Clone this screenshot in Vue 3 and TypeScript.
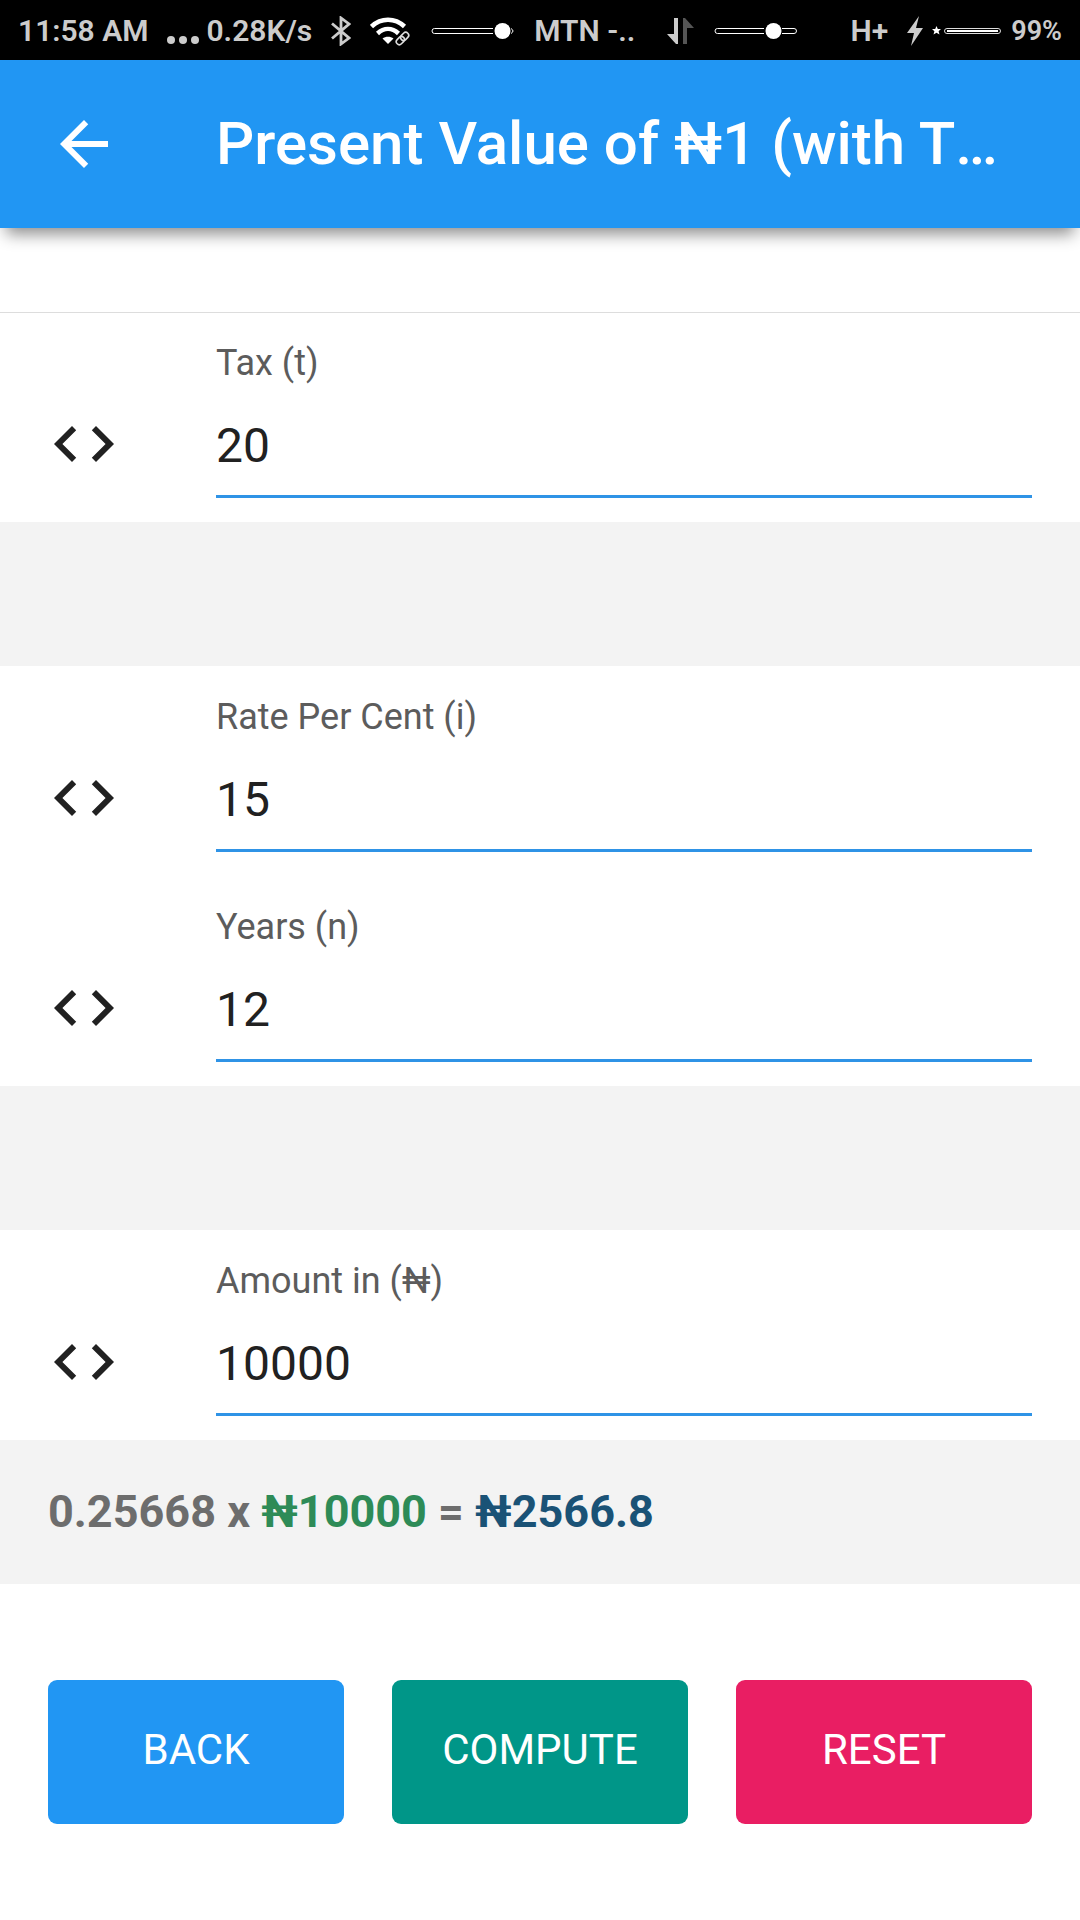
<script setup lang="ts">
import { reactive, ref } from 'vue'

type FieldKey = 'tax' | 'rate' | 'years' | 'amount'

interface Field {
  key: FieldKey
  label: string
}

const groups: Field[][] = [
  [{ key: 'tax', label: 'Tax (t)' }],
  [
    { key: 'rate', label: 'Rate Per Cent (i)' },
    { key: 'years', label: 'Years (n)' },
  ],
  [{ key: 'amount', label: 'Amount in (₦)' }],
]

const form = reactive<Record<FieldKey, string>>({
  tax: '20',
  rate: '15',
  years: '12',
  amount: '10000',
})

const result = ref({ factor: '0.25668', amount: '10000', value: '2566.8' })

// Present value factor of 1 with the rate taken net of tax: (1 + i(1 - t))^-n
function compute(): void {
  const net = (Number(form.rate) / 100) * (1 - Number(form.tax) / 100)
  const factor = Number(Math.pow(1 + net, -Number(form.years)).toFixed(5))
  const value = Number((factor * Number(form.amount)).toFixed(2))
  result.value = { factor: String(factor), amount: form.amount, value: String(value) }
}

function reset(): void {
  form.tax = ''
  form.rate = ''
  form.years = ''
  form.amount = ''
}

function back(): void {
  window.history.back()
}
</script>

<template>
  <div class="screen">
    <div class="status">
      <div class="status-group">
        <span>11:58 AM</span>
        <span class="speed">
          <svg width="32" height="36" viewBox="0 0 32 36" fill="currentColor" aria-hidden="true">
            <circle cx="4" cy="27" r="4" /><circle cx="16" cy="27" r="4" /><circle cx="28" cy="27" r="4" />
          </svg>
          <span>0.28K/s</span>
        </span>
        <svg width="20" height="30" viewBox="0 0 20 30" fill="none" stroke="currentColor" stroke-width="2.8" aria-hidden="true">
          <path d="M1 7.5 18 22 10 28V2L18 8 1 22.500" />
        </svg>
        <svg width="42" height="30" viewBox="0 0 42 30" aria-hidden="true">
          <g fill="none" stroke="#fff" stroke-width="4.500">
            <path d="M1.500 10.500C11 1.500 25 1.500 34.500 10.500" />
            <path d="M7.500 17.500C14 11.500 22 11.500 28.500 17.500" />
          </g>
          <path d="M18 28 12.500 22.500C15.500 20 20.500 20 23.500 22.500z" fill="#fff" />
          <g fill="none" stroke="#ddd" stroke-width="1.600" transform="rotate(-45 32.500 22.500)">
            <rect x="25" y="19.500" width="9" height="6" rx="3" />
            <rect x="31" y="19.500" width="9" height="6" rx="3" />
          </g>
        </svg>
        <svg width="84" height="18" viewBox="0 0 84 18" aria-hidden="true">
          <path d="M62 6.500H3.500a2.500 2.500 0 0 0 0 5H62M80 6.500q4 2.500 0 5" fill="none" stroke="#fff" />
          <circle cx="71.500" cy="9" r="8" fill="#fff" />
        </svg>
        <span>MTN -..</span>
      </div>
      <div class="status-group network">
        <svg width="28" height="28" viewBox="0 0 28 28" aria-hidden="true">
          <path d="M7 1h4v26H9L0 17h7z" fill="currentColor" />
          <path d="M20 27h-4V1h2l9 10h-7z" fill="#555" />
        </svg>
        <svg width="84" height="18" viewBox="0 0 84 18" aria-hidden="true">
          <path d="M50 6.500H3.500a2.500 2.500 0 0 0 0 5H50M68 6.500h12a2.500 2.500 0 0 1 0 5H68" fill="none" stroke="#fff" />
          <circle cx="59.500" cy="9" r="8" fill="#fff" />
        </svg>
      </div>
      <div class="status-group power">
        <span>H+</span>
        <span class="battery">
          <svg width="16" height="30" viewBox="0 0 16 30" fill="currentColor" aria-hidden="true">
            <path d="M12 0 0 17h7L4 30 16 12H9z" />
          </svg>
          <svg width="70" height="10" viewBox="0 0 70 10" aria-hidden="true">
            <path d="M4.500 0 5.800 3H9L6.600 5.200 7.500 8.500 4.500 6.700 1.500 8.500 2.400 5.200 0 3H3.200z" fill="#fff" />
            <rect x="12.500" y="2.500" width="56" height="5" rx="2.500" fill="none" stroke="#ddd" />
            <path d="M15 5h51" stroke="#fff" stroke-width="2" />
          </svg>
          <span class="percent">99%</span>
        </span>
      </div>
    </div>

    <header class="bar">
      <button class="back" type="button" aria-label="Back" @click="back">
        <svg width="72" height="72" viewBox="0 0 24 24" fill="currentColor" aria-hidden="true">
          <path d="M20 11H7.830l5.590-5.590L12 4l-8 8 8 8 1.410-1.410L7.830 13H20v-2z" />
        </svg>
      </button>
      <h1>Present Value of ₦1 (with T<span class="more">…</span></h1>
    </header>

    <form class="form" @submit.prevent="compute">
      <div class="groups">
        <section v-for="(group, index) in groups" :key="index" class="group">
          <div v-for="field in group" :key="field.key" class="field">
            <svg class="code" width="72" height="72" viewBox="0 0 24 24" fill="currentColor" aria-hidden="true">
              <path d="M9.400 16.600 4.800 12l4.600-4.600L8 6l-6 6 6 6 1.400-1.400zm5.200 0 4.600-4.600-4.600-4.600L16 6l6 6-6 6-1.400-1.400z" />
            </svg>
            <div class="control">
              <label :for="field.key">{{ field.label }}</label>
              <input :id="field.key" v-model="form[field.key]" type="text" inputmode="decimal" />
            </div>
          </div>
        </section>
      </div>

      <p class="result">
        {{ result.factor }} x <span class="amount">₦{{ result.amount }}</span> =
        <span class="value">₦{{ result.value }}</span>
      </p>

      <div class="actions">
        <button class="action blue" type="button" @click="back">BACK</button>
        <button class="action teal" type="submit">COMPUTE</button>
        <button class="action pink" type="button" @click="reset">RESET</button>
      </div>
    </form>
  </div>
</template>

<style>
body {
  background: #fff;
}
</style>

<style scoped>
.screen {
  min-height: 100vh;
  background: #fff;
  color: #212121;
  font-family: Roboto, "Noto Sans", sans-serif;
}

.screen * {
  box-sizing: border-box;
}

svg {
  display: block;
  flex: none;
}

.status {
  display: flex;
  align-items: center;
  height: 60px;
  padding: 2px 18px 0;
  background: #000;
  color: #ccc;
  font-size: 30px;
  font-weight: 600;
  line-height: 36px;
  white-space: nowrap;
}

.status-group {
  display: flex;
  align-items: center;
  gap: 19px;
}

.speed,
.battery {
  display: flex;
  align-items: center;
  gap: 7px;
}

.battery {
  gap: 9px;
}

.network {
  margin-left: 32px;
}

.power {
  margin-left: auto;
}

.percent {
  font-size: 27px;
}

.bar {
  position: relative;
  display: flex;
  align-items: center;
  gap: 96px;
  height: 168px;
  padding: 0 48px;
  background: #2196f3;
  color: #fff;
  box-shadow: 0 12px 15px -6px rgba(0, 0, 0, 0.45);
}

.back {
  padding: 0;
  border: 0;
  background: none;
  color: inherit;
}

h1 {
  margin: 0;
  font-size: 60px;
  font-weight: 500;
  line-height: 72px;
  white-space: nowrap;
}

.more {
  display: inline-block;
}

.form {
  padding-top: 84px;
}

.groups {
  display: flex;
  flex-direction: column;
  gap: 144px;
  background: #f3f3f3;
}

.group {
  background: #fff;
}

.group:first-child {
  box-shadow: inset 0 1px #ddd;
}

.field {
  display: flex;
  align-items: center;
  gap: 96px;
  padding: 24px 48px;
}

.code {
  margin-top: 54px;
}

.control {
  flex: 1;
  display: flex;
  flex-direction: column;
  gap: 6px;
  min-width: 0;
}

label {
  color: #5c5c5c;
  font-size: 36px;
  line-height: 54px;
}

input {
  width: 100%;
  height: 102px;
  padding: 0;
  border: 0;
  border-bottom: 3px solid #2f93e6;
  border-radius: 0;
  outline: 0;
  background: none;
  color: #212121;
  font: inherit;
  font-size: 48px;
}

.result {
  margin: 0;
  padding: 45px 48px;
  background: #f3f3f3;
  color: #6d6d6d;
  font-size: 45px;
  font-weight: 700;
  line-height: 54px;
}

.amount {
  color: #2e8b57;
}

.value {
  color: #1a5276;
}

.actions {
  display: flex;
  gap: 48px;
  padding: 96px 48px;
}

.action {
  flex: 1;
  min-width: 0;
  height: 144px;
  padding: 0 0 5px;
  border: 0;
  border-radius: 9px;
  color: #fff;
  font: inherit;
  font-size: 42px;
}

.blue {
  background: #2196f3;
}

.teal {
  background: #009688;
}

.pink {
  background: #e91e63;
}
</style>
